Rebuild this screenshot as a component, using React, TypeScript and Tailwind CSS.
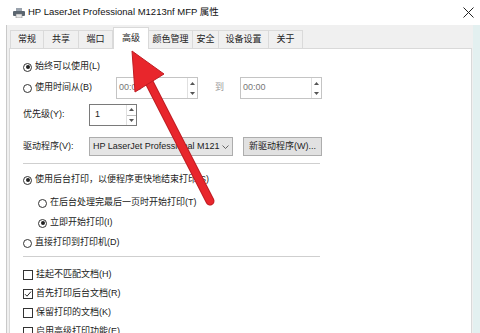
import React from 'react';

const font = { fontFamily: '"Liberation Sans", "Noto Sans CJK SC", sans-serif' };

const Radio = ({ checked = false }: { checked?: boolean }) => (
  <span className="w-[9px] h-[9px] rounded-full border border-[#333] bg-white flex items-center justify-center shrink-0">
    {checked && <span className="w-[4px] h-[4px] rounded-full bg-[#222]" />}
  </span>
);

const Check = ({ checked = false }: { checked?: boolean }) => (
  <span className="w-[10px] h-[10px] border border-[#333] bg-white flex items-center justify-center shrink-0">
    {checked && (
      <svg width="8" height="8" viewBox="0 0 8 8">
        <path d="M1 4.2 L3 6.2 L7 1.6" fill="none" stroke="#222" strokeWidth="1" />
      </svg>
    )}
  </span>
);

const SpinArrows = ({ split = false }: { split?: boolean }) => (
  <div className="w-[10px] h-full flex flex-col border-l border-[#e0e0e0]">
    <div className={`flex-1 flex items-center justify-center ${split ? 'border-b border-[#bdbdbd]' : ''}`}>
      <svg width="5" height="3" viewBox="0 0 5 3">
        <path d="M0 3 L2.5 0 L5 3Z" fill="#555" />
      </svg>
    </div>
    <div className="flex-1 flex items-center justify-center">
      <svg width="5" height="3" viewBox="0 0 5 3">
        <path d="M0 0 L2.5 3 L5 0Z" fill="#555" />
      </svg>
    </div>
  </div>
);

const TimeBox = () => (
  <div className="w-[82px] h-[22px] border border-[#c4c4c4] bg-white flex">
    <span className="flex-1 pl-[2px] text-[#777] flex items-center">00:00</span>
    <SpinArrows />
  </div>
);

const tabs = ['常规', '共享', '端口', '高级', '颜色管理', '安全', '设备设置', '关于'];
const tabW = [34, 35, 34, 36, 44, 26, 50, 34];

const App = () => {
  return (
    <div className="w-[480px] h-[333px] overflow-hidden relative bg-white text-[9px] text-[#222] flex flex-col" style={font}>
      {/* title bar */}
      <div className="h-[25px] flex items-center shrink-0 pl-[13px] pr-[6px]">
        <svg width="12" height="10" viewBox="0 0 12 10">
          <rect x="3" y="0" width="6" height="3" fill="#9aa3ad" />
          <rect x="0" y="3" width="12" height="5" rx="1" fill="#5b6670" />
          <rect x="3" y="6" width="6" height="4" fill="#e8e8e8" stroke="#777" strokeWidth="0.5" />
        </svg>
        <span className="ml-[3px] text-[9.5px] text-[#111]">HP LaserJet Professional M1213nf MFP 属性</span>
        <div className="flex-1" />
        <svg width="11" height="11" viewBox="0 0 11 11">
          <path d="M0.5 0.5 L10.5 10.5 M10.5 0.5 L0.5 10.5" stroke="#222" strokeWidth="1" />
        </svg>
      </div>

      {/* body */}
      <div className="flex-1 flex">
        <div className="w-[7px] bg-white border-r border-[#c9c9c9]" />
        <div className="flex-1 bg-[#f0f0f0] flex flex-col pl-[2px]">
          {/* tab strip */}
          <div className="h-[23px] flex items-end shrink-0 pl-[1px]">
            {tabs.map((t, i) =>
              i === 3 ? (
                <div
                  key={t}
                  style={{ width: tabW[i] }}
                  className="h-[22px] -mb-[1px] bg-white border border-b-0 border-[#d9d9d9] flex justify-center pt-[4px] relative z-10"
                >
                  {t}
                </div>
              ) : (
                <div
                  key={t}
                  style={{ width: tabW[i] }}
                  className="h-[18px] border border-b-0 border-l-0 first:border-l border-[#dadada] flex items-center justify-center"
                >
                  {t}
                </div>
              )
            )}
          </div>

          {/* panel */}
          <div className="flex-1 bg-white border border-[#d9d9d9] border-b-0 mr-[1px] pl-[13px] pt-[8px] flex flex-col">
            <div className="h-[20px] flex items-center gap-[3px]">
              <Radio checked />
              <span>始终可以使用(L)</span>
            </div>
            <div className="h-[22px] flex items-center">
              <div className="w-[93px] flex items-center gap-[3px]">
                <Radio />
                <span>使用时间从(B)</span>
              </div>
              <TimeBox />
              <span className="w-[42px] pl-[17px] text-[#999]">到</span>
              <TimeBox />
            </div>
            <div className="h-[22px] mt-[5px] flex items-center">
              <span className="w-[66px]">优先级(Y):</span>
              <div className="w-[48px] h-[22px] border border-[#7a7a7a] bg-white flex">
                <span className="flex-1 pl-[5px] flex items-center">1</span>
                <SpinArrows split />
              </div>
            </div>
            <div className="h-[19px] mt-[11px] flex items-center">
              <span className="w-[66px]">驱动程序(V):</span>
              <div className="w-[144px] h-[19px] border border-[#adadad] bg-[#e5e5e5] flex items-center pl-[3px] pr-[3px]">
                <span className="flex-1">HP LaserJet Professional M121</span>
                <svg width="7" height="4" viewBox="0 0 7 4">
                  <path d="M0.5 0.5 L3.5 3.5 L6.5 0.5" fill="none" stroke="#444" strokeWidth="0.8" />
                </svg>
              </div>
              <div className="ml-[10px] w-[79px] h-[19px] border border-[#adadad] bg-[#e1e1e1] flex items-center justify-center">
                新驱动程序(W)...
              </div>
            </div>
            <div className="w-[297px] h-[2px] mt-[7px] bg-[#cfcfcf] border-b border-white" />
            <div className="h-[20px] mt-[5px] flex items-center gap-[3px]">
              <Radio checked />
              <span>使用后台打印，以便程序更快地结束打印(S)</span>
            </div>
            <div className="h-[20px] mt-[3px] pl-[15px] flex items-center gap-[3px]">
              <Radio />
              <span>在后台处理完最后一页时开始打印(T)</span>
            </div>
            <div className="h-[20px] pl-[15px] flex items-center gap-[3px]">
              <Radio checked />
              <span>立即开始打印(I)</span>
            </div>
            <div className="h-[20px] flex items-center gap-[3px]">
              <Radio />
              <span>直接打印到打印机(D)</span>
            </div>
            <div className="w-[297px] h-[2px] mt-[3px] bg-[#cfcfcf] border-b border-white" />
            <div className="h-[19px] mt-[7px] flex items-center gap-[3px]">
              <Check />
              <span>挂起不匹配文档(H)</span>
            </div>
            <div className="h-[19px] flex items-center gap-[3px]">
              <Check checked />
              <span>首先打印后台文档(R)</span>
            </div>
            <div className="h-[19px] flex items-center gap-[3px]">
              <Check />
              <span>保留打印的文档(K)</span>
            </div>
            <div className="h-[19px] flex items-center gap-[3px]">
              <Check />
              <span>启用高级打印功能(E)</span>
            </div>
          </div>
        </div>
        <div className="w-[7px] bg-[#e3f0f0]" />
      </div>

      {/* red annotation arrow */}
      <svg className="absolute inset-0 pointer-events-none" width="480" height="333" viewBox="0 0 480 333">
        <line x1="148" y1="80" x2="210" y2="201" stroke="#c01d23" strokeWidth="9" strokeLinecap="round" />
        <line x1="148" y1="80" x2="210" y2="201" stroke="#e8262c" strokeWidth="7" strokeLinecap="round" />
        <path d="M132 51 L164 74 L135 92 Z" fill="#e8262c" stroke="#c01d23" strokeWidth="1" strokeLinejoin="round" />
      </svg>
    </div>
  );
};

export default App;
